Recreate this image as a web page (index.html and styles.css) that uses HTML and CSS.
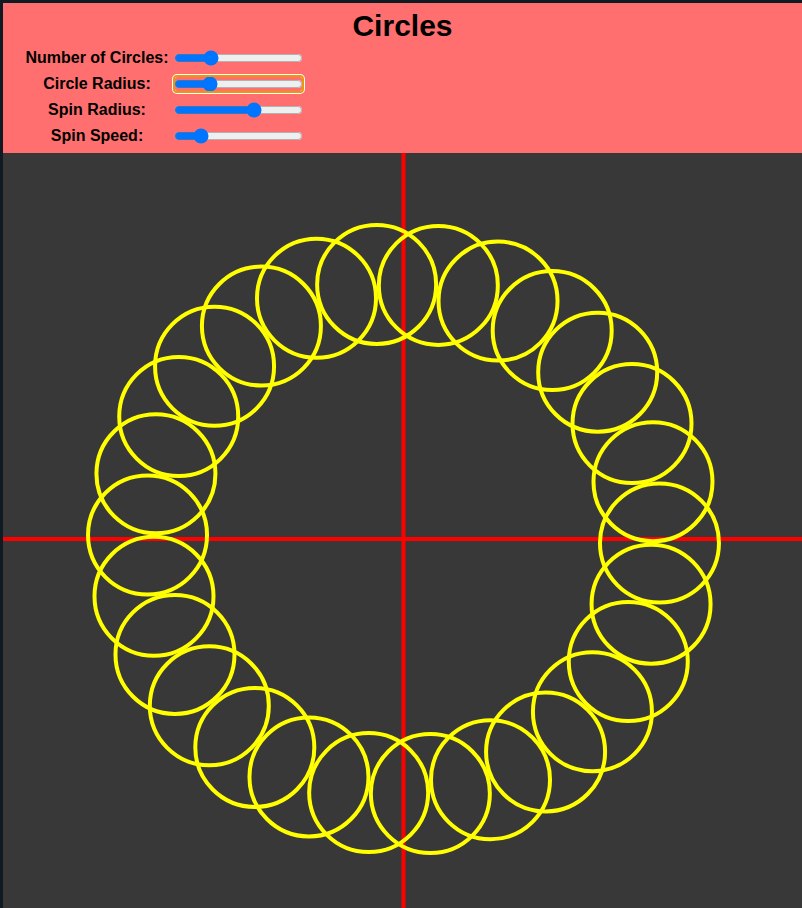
FILE: index.html
```html
<!DOCTYPE html>
<html lang="en">
<head>
<meta charset="utf-8">
<title>Circles</title>
<link rel="stylesheet" href="styles.css">
</head>
<body>
<div class="app">
  <header class="panel">
    <h1 class="title">Circles</h1>
    <div class="controls">
      <label class="label" for="num">Number of Circles:</label>
      <input class="slider" id="num" type="range" min="0" max="100" value="26">
      <label class="label" for="rad">Circle Radius:</label>
      <input class="slider is-focused" id="rad" type="range" min="0" max="100" value="25">
      <label class="label" for="spin">Spin Radius:</label>
      <input class="slider" id="spin" type="range" min="0" max="100" value="64">
      <label class="label" for="speed">Spin Speed:</label>
      <input class="slider" id="speed" type="range" min="0" max="100" value="17">
    </div>
  </header>
  <svg class="stage" width="799" height="755" viewBox="0 0 799 755" xmlns="http://www.w3.org/2000/svg">
    <g class="axes">
      <line x1="400.5" y1="0" x2="400.5" y2="755"/>
      <line x1="0" y1="386" x2="799" y2="386"/>
    </g>
    <g class="rings">
      <circle cx="656.47" cy="390.02" r="59.5"/>
      <circle cx="648.07" cy="451.16" r="59.5"/>
      <circle cx="625.28" cy="508.51" r="59.5"/>
      <circle cx="589.44" cy="558.73" r="59.5"/>
      <circle cx="542.58" cy="598.96" r="59.5"/>
      <circle cx="487.50" cy="626.76" r="59.5"/>
      <circle cx="427.36" cy="640.59" r="59.5"/>
      <circle cx="365.66" cy="639.62" r="59.5"/>
      <circle cx="305.97" cy="623.91" r="59.5"/>
      <circle cx="251.81" cy="594.39" r="59.5"/>
      <circle cx="206.31" cy="552.81" r="59.5"/>
      <circle cx="171.99" cy="501.40" r="59.5"/>
      <circle cx="151.00" cy="443.35" r="59.5"/>
      <circle cx="144.53" cy="381.98" r="59.5"/>
      <circle cx="152.93" cy="320.84" r="59.5"/>
      <circle cx="175.72" cy="263.49" r="59.5"/>
      <circle cx="211.56" cy="213.27" r="59.5"/>
      <circle cx="258.42" cy="173.04" r="59.5"/>
      <circle cx="313.50" cy="145.24" r="59.5"/>
      <circle cx="373.64" cy="131.41" r="59.5"/>
      <circle cx="435.34" cy="132.38" r="59.5"/>
      <circle cx="495.03" cy="148.09" r="59.5"/>
      <circle cx="549.19" cy="177.61" r="59.5"/>
      <circle cx="594.69" cy="219.19" r="59.5"/>
      <circle cx="629.01" cy="270.60" r="59.5"/>
      <circle cx="649.99" cy="328.65" r="59.5"/>
    </g>
  </svg>
</div>
</body>
</html>
```

FILE: styles.css
```css
html, body {
  margin: 0;
  padding: 0;
  overflow: hidden;
  background: #0f1a23;
}

body {
  font-family: "Liberation Sans", Arial, sans-serif;
}

.app {
  padding: 3px 0 0 3px;
  display: flex;
  flex-direction: column;
}

.panel {
  background: #ff6f6f;
  padding: 6px 0 4px;
}

.title {
  margin: 0;
  font-size: 30px;
  line-height: 34px;
  font-weight: 700;
  text-align: center;
  color: #000;
}

.controls {
  margin: 2px 0 0 19px;
  display: grid;
  grid-template-columns: 150px auto;
  grid-auto-rows: 26px;
  align-items: center;
  justify-content: start;
}

.label {
  font-size: 16px;
  font-weight: 700;
  text-align: center;
  color: #000;
}

.slider {
  margin: 2px;
  width: 129px;
  border-radius: 3px;
}

.is-focused {
  outline: 2px solid #e8990a;
  outline-offset: -1px;
  box-shadow: 0 0 0 2px #ffffff;
}

.stage {
  display: block;
  background: #383838;
}

.axes line {
  stroke: #ff0000;
  stroke-width: 4;
}

.rings circle {
  fill: none;
  stroke: #ffff00;
  stroke-width: 4;
}
```
